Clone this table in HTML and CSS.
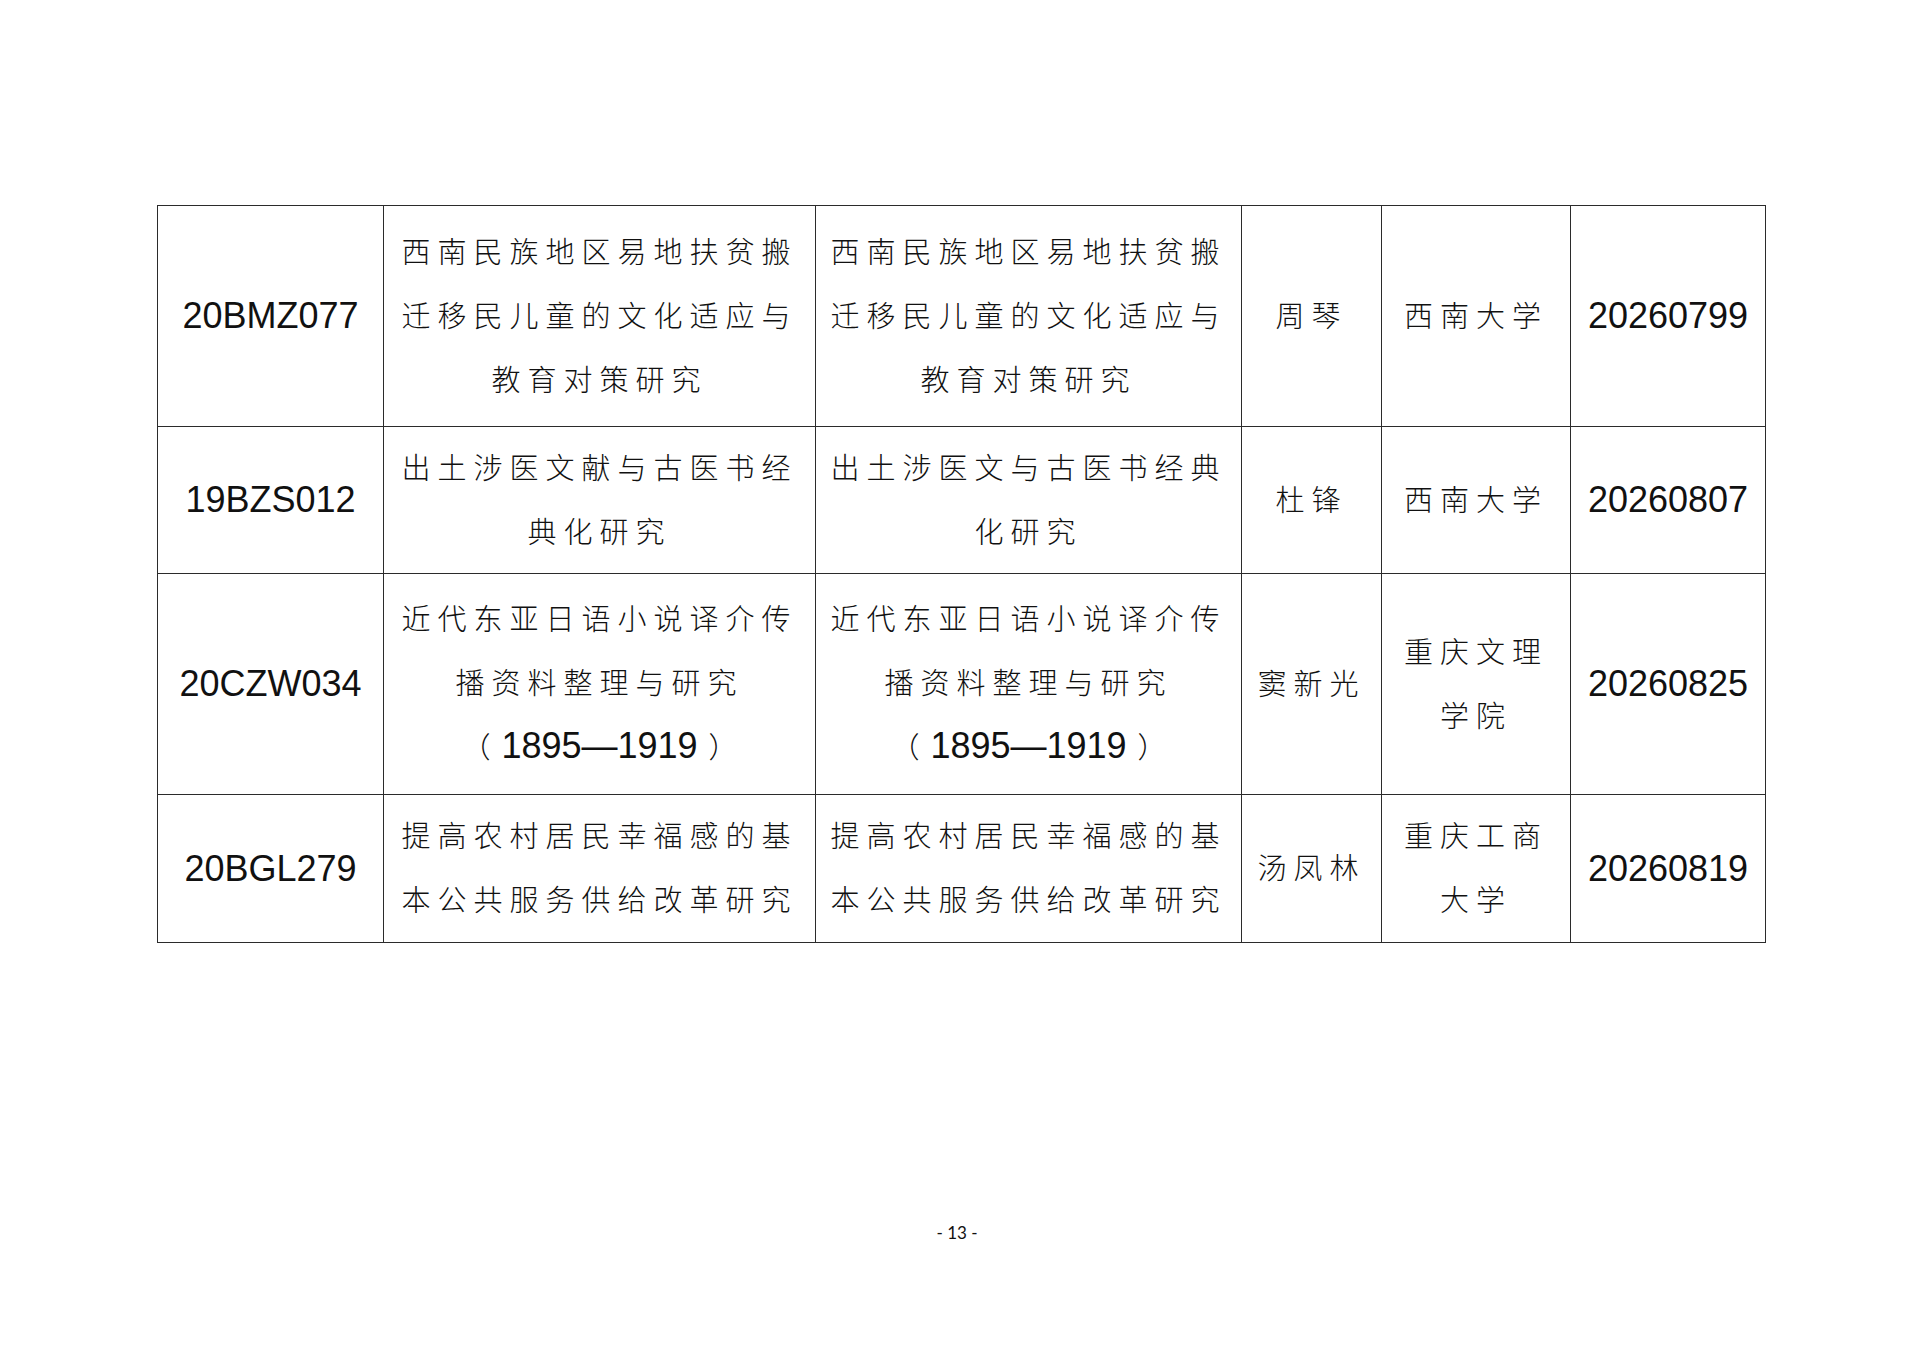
FILE: index.html
```html
<!DOCTYPE html>
<html lang="zh-CN">
<head>
<meta charset="utf-8">
<title>第13页</title>
<link rel="stylesheet" href="styles.css">
</head>
<body>
<div class="page">
  <table class="grid">
    <colgroup>
      <col class="c-code">
      <col class="c-title">
      <col class="c-title2">
      <col class="c-name">
      <col class="c-unit">
      <col class="c-num">
    </colgroup>
    <tbody>
      <tr class="r-tall">
        <td class="num">20BMZ077</td>
        <td class="zh">西南民族地区易地扶贫搬迁移民儿童的文化适应与教育对策研究</td>
        <td class="zh">西南民族地区易地扶贫搬迁移民儿童的文化适应与教育对策研究</td>
        <td class="zh">周琴</td>
        <td class="zh">西南大学</td>
        <td class="num">20260799</td>
      </tr>
      <tr class="r-short">
        <td class="num">19BZS012</td>
        <td class="zh">出土涉医文献与古医书经典化研究</td>
        <td class="zh">出土涉医文与古医书经典化研究</td>
        <td class="zh">杜锋</td>
        <td class="zh">西南大学</td>
        <td class="num">20260807</td>
      </tr>
      <tr class="r-tall">
        <td class="num">20CZW034</td>
        <td class="zh">近代东亚日语小说译介传播资料整理与研究<br><span class="paren open">（</span><span class="num-in">1895—1919</span><span class="paren close">）</span></td>
        <td class="zh">近代东亚日语小说译介传播资料整理与研究<br><span class="paren open">（</span><span class="num-in">1895—1919</span><span class="paren close">）</span></td>
        <td class="zh">窦新光</td>
        <td class="zh">重庆文理学院</td>
        <td class="num">20260825</td>
      </tr>
      <tr class="r-last">
        <td class="num">20BGL279</td>
        <td class="zh">提高农村居民幸福感的基本公共服务供给改革研究</td>
        <td class="zh">提高农村居民幸福感的基本公共服务供给改革研究</td>
        <td class="zh">汤凤林</td>
        <td class="zh">重庆工商大学</td>
        <td class="num">20260819</td>
      </tr>
    </tbody>
  </table>
  <div class="pageno">- 13 -</div>
</div>
</body>
</html>
```

FILE: styles.css
```css
html, body {
  margin: 0;
  padding: 0;
  background: #ffffff;
}

.page {
  width: 1920px;
  height: 1358px;
  padding-top: 205px;
  padding-left: 157px;
  box-sizing: border-box;
  display: flex;
  flex-direction: column;
}

.grid {
  border-collapse: collapse;
  table-layout: fixed;
  width: 1608px;
}

.c-code { width: 226px; }
.c-title { width: 432px; }
.c-title2 { width: 426px; }
.c-name { width: 140px; }
.c-unit { width: 189px; }
.c-num { width: 195px; }

.grid td {
  border: 1.5px solid #2b2b2b;
  padding: 0 8px;
  text-align: center;
  vertical-align: middle;
  color: #111;
  line-height: 64px;
}

.r-tall { height: 221px; }
.r-short { height: 147px; }
.r-last { height: 148px; }

.num {
  font-family: "Liberation Sans", Arial, sans-serif;
  font-size: 36px;
  letter-spacing: 0;
}

.grid td.zh {
  font-family: "Noto Sans CJK SC", "Noto Sans CJK JP", sans-serif;
  font-weight: 300;
  font-size: 29px;
  letter-spacing: 7px;
  padding-bottom: 5px;
}

.num-in {
  font-family: "Liberation Sans", Arial, sans-serif;
  font-size: 36px;
  font-weight: 400;
  letter-spacing: 0;
}

.paren {
  letter-spacing: 0;
}

.paren.open {
  margin-right: 11px;
}

.paren.close {
  margin-left: 11px;
}

.pageno {
  margin-top: 280px;
  width: 1608px;
  text-align: center;
  font-family: "Lato", "Open Sans", sans-serif;
  font-size: 17px;
  line-height: 20px;
  color: #111;
  transform: translateX(-4px);
}
```
